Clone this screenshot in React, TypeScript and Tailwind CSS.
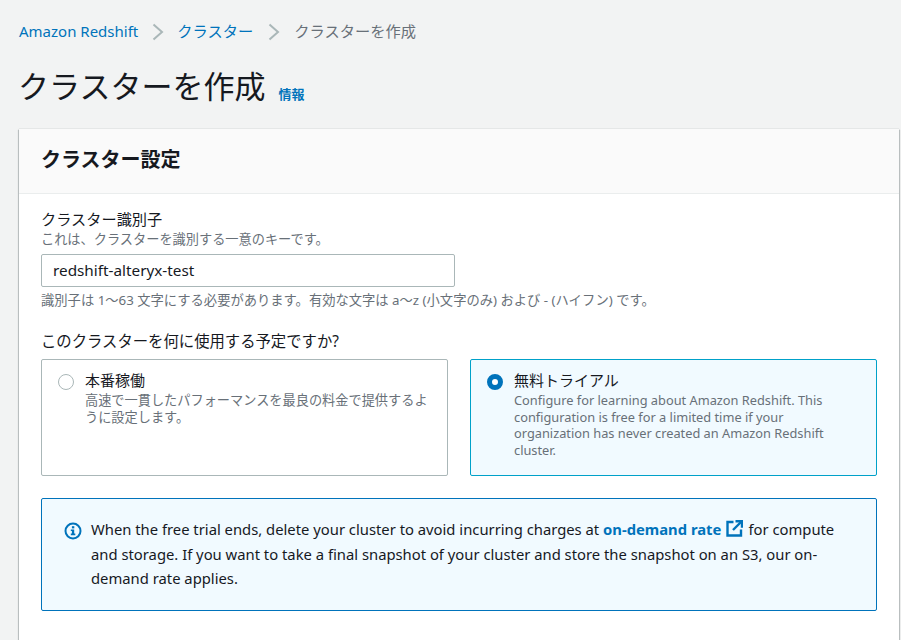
const font = "font-['Noto_Sans','Noto_Sans_CJK_JP',sans-serif]";

function Chevron() {
  return (
    <svg width="12" height="18" viewBox="0 0 12 18" fill="none" className="shrink-0">
      <path d="M1.5 1.5l8.5 7.5-8.5 7.5" stroke="#aab7b8" strokeWidth="2" />
    </svg>
  );
}

function Radio({ checked }: { checked?: boolean }) {
  if (checked) {
    return <span className="mt-[5px] box-border block h-4 w-4 shrink-0 rounded-full border-[5px] border-[#0073bb] bg-white" />;
  }
  return <span className="mt-[5px] box-border block h-4 w-4 shrink-0 rounded-full border border-[#aab7b8] bg-white" />;
}

function InfoIcon() {
  return (
    <svg width="18" height="18" viewBox="0 0 18 18" className="mt-[5px] shrink-0">
      <circle cx="9" cy="9" r="7.5" fill="none" stroke="#0073bb" strokeWidth="2" />
      <rect x="7.9" y="4.2" width="2.4" height="2.2" fill="#0073bb" />
      <path d="M6.8 7.4h3.4v4.2h1.1v1.6H6.8v-1.6h1.1V9H6.8z" fill="#0073bb" />
    </svg>
  );
}

function ExternalIcon() {
  return (
    <svg width="17" height="17" viewBox="0 0 17 17" fill="none" className="mx-[5px] inline-block align-[-2px]">
      <path d="M7.5 2H1.5v13.5H15V9.5" stroke="#0073bb" strokeWidth="2.4" />
      <path d="M9.5 1.2H16v6.5" stroke="#0073bb" strokeWidth="2.4" />
      <path d="M15.5 1.5L7 10" stroke="#0073bb" strokeWidth="2.4" />
    </svg>
  );
}

export default function App() {
  return (
    <div className={`${font} h-[640px] w-[901px] overflow-hidden bg-[#f2f3f3] pl-[19px] pr-[2px] text-[#16191f]`}>
      <nav className="flex h-[63px] items-center text-[15.25px]">
        <span className="text-[15px] text-[#0073bb]">Amazon Redshift</span>
        <span className="mr-[13px] ml-[14px]"><Chevron /></span>
        <span className="text-[#0073bb]">クラスター</span>
        <span className="mr-[14px] ml-[15px]"><Chevron /></span>
        <span className="text-[#687078]">クラスターを作成</span>
      </nav>

      <div className="flex h-[66px] items-start">
        <h1 className="-ml-[1px] -mt-[2px] text-[31px] leading-[50px] font-normal">クラスターを作成</h1>
        <span className="mt-[21px] ml-[13px] text-[13px] leading-5 font-bold text-[#0073bb]">情報</span>
      </div>

      <section className="min-h-[520px] bg-white shadow-[0_0_1px_0_rgba(0,28,36,0.3),0_1px_1px_0_rgba(0,28,36,0.3),1px_1px_1px_0_rgba(0,28,36,0.15),-1px_1px_1px_0_rgba(0,28,36,0.15)]">
        <header className="flex h-[65px] items-center border-b border-[#eaeded] bg-[#fafafa] px-[22px] pb-[3px]">
          <h2 className="text-[20px] font-bold">クラスター設定</h2>
        </header>

        <div className="px-[22px] pt-[14px]">
          <label className="block text-[15.2px] leading-[22px]">クラスター識別子</label>
          <p className="mt-[2px] text-[13.2px] leading-[15px] text-[#687078]">これは、クラスターを識別する一意のキーです。</p>
          <div className="mt-[7px] flex h-[33px] w-[414px] items-center rounded-[2px] border border-[#aab7b8] bg-white px-[11px] text-[15.3px]">
            redshift-alteryx-test
          </div>
          <p className="mt-[4px] text-[13.3px] leading-[18px] text-[#687078]">
            識別子は 1～63 文字にする必要があります。有効な文字は a～z (小文字のみ) および - (ハイフン) です。
          </p>

          <p className="mt-[21px] text-[15.35px] leading-[22px]">このクラスターを何に使用する予定ですか?</p>

          <div className="mt-[7px] grid h-[117px] grid-cols-[407px_407px] gap-x-[22px]">
            <div className="flex gap-[11px] rounded-[2px] border border-[#aab7b8] bg-white pt-[9px] pr-[14px] pl-[16px]">
              <Radio />
              <div>
                <div className="text-[15px] leading-[22px]">本番稼働</div>
                <p className="mt-[1px] text-[13.2px] leading-[17px] text-[#687078]">
                  高速で一貫したパフォーマンスを最良の料金で提供するように設定します。
                </p>
              </div>
            </div>
            <div className="flex gap-[11px] rounded-[2px] border border-[#00a1c9] bg-[#f1faff] pt-[9px] pr-[14px] pl-[16px]">
              <Radio checked />
              <div>
                <div className="text-[15px] leading-[22px]">無料トライアル</div>
                <p className="mt-[1px] text-[12.8px] leading-[16.5px] text-[#687078]">
                  Configure for learning about Amazon Redshift. This configuration is free for a limited time if your organization has never created an Amazon Redshift cluster.
                </p>
              </div>
            </div>
          </div>

          <div className="mt-[22px] flex h-[113px] gap-[9px] rounded-[2px] border border-[#0073bb] bg-[#f1faff] pt-[18px] pr-[30px] pl-[22px]">
            <InfoIcon />
            <p className="text-[14.8px] leading-[24.5px]">
              When the free trial ends, delete your cluster to avoid incurring charges at{" "}
              <span className="font-bold text-[#0073bb]">on-demand rate</span>
              <ExternalIcon />
              for compute and storage. If you want to take a final snapshot of your cluster and store the snapshot on an S3, our on-demand rate applies.
            </p>
          </div>
        </div>
      </section>
    </div>
  );
}
